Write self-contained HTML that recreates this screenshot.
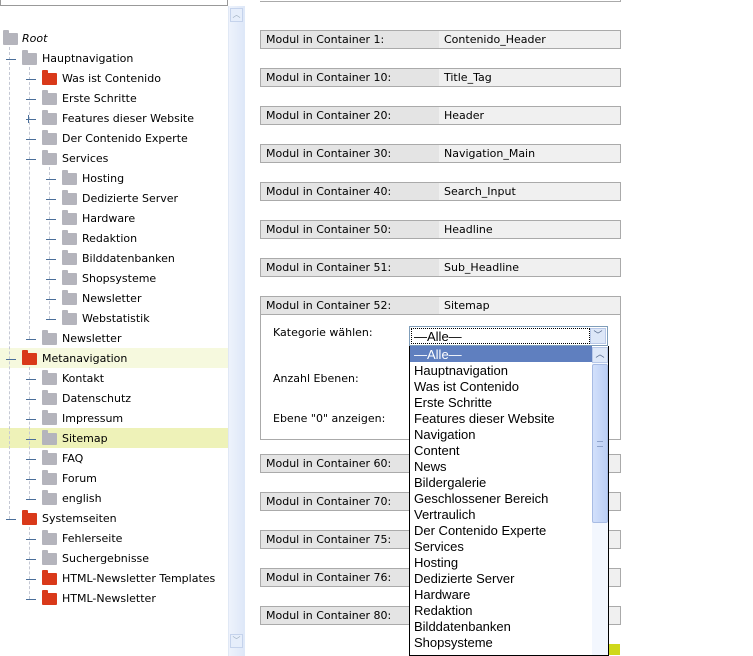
<!DOCTYPE html>
<html><head><meta charset="utf-8">
<style>
*{margin:0;padding:0;box-sizing:border-box}
body{width:753px;height:654px;overflow:hidden;background:#fff;position:relative;font-family:"DejaVu Sans",Verdana,sans-serif;font-size:11px;color:#000}
#w{position:absolute;left:0;top:1px;width:753px;height:654px}
.a{position:absolute}
.it{position:absolute;height:20px;line-height:20px;white-space:nowrap;margin-top:1px}
.f{position:absolute;width:15px;height:12px;background:#b4b4bc;border-radius:1px;margin-top:1px}
.f::before{content:"";position:absolute;left:0;top:-3px;width:6px;height:4px;background:inherit;border-radius:1px 1px 0 0}
.r{background:#d9391a}
.dh{position:absolute;height:1px;width:10px;border-top:1px solid #4a6f9a;margin-top:1px}
.v{position:absolute;width:1px;border-left:1px dashed #c4c8d4}
.row{position:absolute;left:260px;width:361px;height:19px;border:1px solid #aaa;background:#f0f0f0;line-height:18px}
.row .l{position:absolute;left:0;top:0;width:178px;height:17px;background:#e4e4e4;padding-left:5px}
.row .val{position:absolute;left:183px;top:0}
.dd div{height:16px;line-height:17px;padding-left:4px;font-family:"Liberation Sans",Arial,sans-serif;font-size:13px}
</style></head><body><div id="w">
<div class="a" style="left:0;top:-3px;width:228px;height:8px;border:1px solid #999;background:#fff"></div>
<div class="a" style="left:228px;top:5px;width:17px;height:650px;background:linear-gradient(90deg,#eef3fc,#dde7f8);border-left:1px solid #e0e8f5"></div>
<div class="a" style="left:230px;top:7px;width:13px;height:14px;border:1px solid #c5d3ec;background:#e6eefb;color:#9ab;font-size:8px;text-align:center;line-height:12px">︿</div>
<div class="a" style="left:230px;top:633px;width:13px;height:14px;border:1px solid #c5d3ec;background:#e6eefb;color:#9ab;font-size:8px;text-align:center;line-height:12px">﹀</div>
<div class="a" style="left:0;top:347px;width:228px;height:20px;background:#f6f9de"></div>
<div class="a" style="left:0;top:427px;width:228px;height:20px;background:#eef2b8"></div>
<div class="v" style="left:9px;top:46px;height:472px"></div>
<div class="v" style="left:29px;top:66px;height:272px"></div>
<div class="v" style="left:29px;top:366px;height:132px"></div>
<div class="v" style="left:29px;top:526px;height:72px"></div>
<div class="v" style="left:49px;top:166px;height:152px"></div>

<div class="f" style="left:3px;top:31px"></div><div class="it" style="left:22px;top:27px;font-style:italic">Root</div>

<div class="dh" style="left:6px;top:57px"></div><div class="f" style="left:22px;top:51px"></div><div class="it" style="left:42px;top:47px">Hauptnavigation</div>
<div class="dh" style="left:26px;top:77px"></div><div class="f r" style="left:42px;top:71px"></div><div class="it" style="left:62px;top:67px">Was ist Contenido</div>
<div class="dh" style="left:26px;top:97px"></div><div class="f" style="left:42px;top:91px"></div><div class="it" style="left:62px;top:87px">Erste Schritte</div>
<div class="dh" style="left:26px;top:117px"></div><div class="a" style="left:28px;top:114px;width:1px;height:8px;background:#4a6f9a"></div><div class="f" style="left:42px;top:111px"></div><div class="it" style="left:62px;top:107px">Features dieser Website</div>
<div class="dh" style="left:26px;top:137px"></div><div class="f" style="left:42px;top:131px"></div><div class="it" style="left:62px;top:127px">Der Contenido Experte</div>
<div class="dh" style="left:26px;top:157px"></div><div class="f" style="left:42px;top:151px"></div><div class="it" style="left:62px;top:147px">Services</div>
<div class="dh" style="left:46px;top:177px"></div><div class="f" style="left:62px;top:171px"></div><div class="it" style="left:82px;top:167px">Hosting</div>
<div class="dh" style="left:46px;top:197px"></div><div class="f" style="left:62px;top:191px"></div><div class="it" style="left:82px;top:187px">Dedizierte Server</div>
<div class="dh" style="left:46px;top:217px"></div><div class="f" style="left:62px;top:211px"></div><div class="it" style="left:82px;top:207px">Hardware</div>
<div class="dh" style="left:46px;top:237px"></div><div class="f" style="left:62px;top:231px"></div><div class="it" style="left:82px;top:227px">Redaktion</div>
<div class="dh" style="left:46px;top:257px"></div><div class="f" style="left:62px;top:251px"></div><div class="it" style="left:82px;top:247px">Bilddatenbanken</div>
<div class="dh" style="left:46px;top:277px"></div><div class="f" style="left:62px;top:271px"></div><div class="it" style="left:82px;top:267px">Shopsysteme</div>
<div class="dh" style="left:46px;top:297px"></div><div class="f" style="left:62px;top:291px"></div><div class="it" style="left:82px;top:287px">Newsletter</div>
<div class="dh" style="left:46px;top:317px"></div><div class="f" style="left:62px;top:311px"></div><div class="it" style="left:82px;top:307px">Webstatistik</div>
<div class="dh" style="left:26px;top:337px"></div><div class="f" style="left:42px;top:331px"></div><div class="it" style="left:62px;top:327px">Newsletter</div>

<div class="dh" style="left:6px;top:357px"></div><div class="f r" style="left:22px;top:351px"></div><div class="it" style="left:42px;top:347px">Metanavigation</div>
<div class="dh" style="left:26px;top:377px"></div><div class="f" style="left:42px;top:371px"></div><div class="it" style="left:62px;top:367px">Kontakt</div>
<div class="dh" style="left:26px;top:397px"></div><div class="f" style="left:42px;top:391px"></div><div class="it" style="left:62px;top:387px">Datenschutz</div>
<div class="dh" style="left:26px;top:417px"></div><div class="f" style="left:42px;top:411px"></div><div class="it" style="left:62px;top:407px">Impressum</div>
<div class="dh" style="left:26px;top:437px"></div><div class="f" style="left:42px;top:431px"></div><div class="it" style="left:62px;top:427px">Sitemap</div>
<div class="dh" style="left:26px;top:457px"></div><div class="f" style="left:42px;top:451px"></div><div class="it" style="left:62px;top:447px">FAQ</div>
<div class="dh" style="left:26px;top:477px"></div><div class="f" style="left:42px;top:471px"></div><div class="it" style="left:62px;top:467px">Forum</div>
<div class="dh" style="left:26px;top:497px"></div><div class="f" style="left:42px;top:491px"></div><div class="it" style="left:62px;top:487px">english</div>

<div class="dh" style="left:6px;top:517px"></div><div class="f r" style="left:22px;top:511px"></div><div class="it" style="left:42px;top:507px">Systemseiten</div>
<div class="dh" style="left:26px;top:537px"></div><div class="f" style="left:42px;top:531px"></div><div class="it" style="left:62px;top:527px">Fehlerseite</div>
<div class="dh" style="left:26px;top:557px"></div><div class="f" style="left:42px;top:551px"></div><div class="it" style="left:62px;top:547px">Suchergebnisse</div>
<div class="dh" style="left:26px;top:577px"></div><div class="f r" style="left:42px;top:571px"></div><div class="it" style="left:62px;top:567px">HTML-Newsletter Templates</div>
<div class="dh" style="left:26px;top:597px"></div><div class="f r" style="left:42px;top:591px"></div><div class="it" style="left:62px;top:587px">HTML-Newsletter</div>

<div class="a" style="left:260px;top:-1px;width:361px;height:2px;border-bottom:1px solid #aaa;border-right:1px solid #aaa"></div>
<div class="row" style="top:29px"><div class="l">Modul in Container 1:</div><div class="val">Contenido_Header</div></div>
<div class="row" style="top:67px"><div class="l">Modul in Container 10:</div><div class="val">Title_Tag</div></div>
<div class="row" style="top:105px"><div class="l">Modul in Container 20:</div><div class="val">Header</div></div>
<div class="row" style="top:143px"><div class="l">Modul in Container 30:</div><div class="val">Navigation_Main</div></div>
<div class="row" style="top:181px"><div class="l">Modul in Container 40:</div><div class="val">Search_Input</div></div>
<div class="row" style="top:219px"><div class="l">Modul in Container 50:</div><div class="val">Headline</div></div>
<div class="row" style="top:257px"><div class="l">Modul in Container 51:</div><div class="val">Sub_Headline</div></div>
<div class="a" style="left:260px;top:295px;width:361px;height:144px;border:1px solid #aaa"></div>
<div class="row" style="top:295px"><div class="l">Modul in Container 52:</div><div class="val">Sitemap</div></div>
<div class="a" style="left:273px;top:325px">Kategorie wählen:</div>
<div class="a" style="left:273px;top:371px">Anzahl Ebenen:</div>
<div class="a" style="left:273px;top:411px">Ebene "0" anzeigen:</div>
<div class="row" style="top:453px"><div class="l">Modul in Container 60:</div></div>
<div class="row" style="top:491px"><div class="l">Modul in Container 70:</div></div>
<div class="row" style="top:529px"><div class="l">Modul in Container 75:</div></div>
<div class="row" style="top:567px"><div class="l">Modul in Container 76:</div></div>
<div class="row" style="top:605px"><div class="l">Modul in Container 80:</div></div>
<div class="a" style="left:608px;top:643px;width:12px;height:11px;background:#cfd81a"></div>

<div class="a" style="left:409px;top:325px;width:199px;height:20px;border:1px solid #7f9db9;background:#fff"></div>
<div class="a" style="left:411px;top:327px;width:179px;height:16px;border:1px dotted #000;font-family:'Liberation Sans',Arial,sans-serif;font-size:13px;line-height:15px;padding-left:2px">—Alle—</div>
<div class="a" style="left:590px;top:327px;width:16px;height:16px;border:1px solid #b8c8e8;background:#dde7f8;color:#4d6185;font-size:9px;text-align:center;line-height:14px">﹀</div>
<div class="a dd" style="left:409px;top:345px;width:200px;height:310px;border:1px solid #000;border-top:none;background:#fff;overflow:hidden">
<div style="background:#5f7fbf;color:#fff;margin-right:16px">—Alle—</div>
<div>Hauptnavigation</div><div>Was ist Contenido</div><div>Erste Schritte</div><div>Features dieser Website</div><div>Navigation</div><div>Content</div><div>News</div><div>Bildergalerie</div><div>Geschlossener Bereich</div><div>Vertraulich</div><div>Der Contenido Experte</div><div>Services</div><div>Hosting</div><div>Dedizierte Server</div><div>Hardware</div><div>Redaktion</div><div>Bilddatenbanken</div><div>Shopsysteme</div>
</div>
<div class="a" style="left:592px;top:346px;width:16px;height:308px;background:#f3f7fe"></div>
<div class="a" style="left:592px;top:346px;width:16px;height:16px;border:1px solid #b8c8e8;background:#dde7f8;color:#4d6185;font-size:9px;text-align:center;line-height:14px">︿</div>
<div class="a" style="left:592px;top:363px;width:16px;height:159px;border:1px solid #a8bce4;border-radius:2px;background:linear-gradient(90deg,#d2e0fb,#bccff5)"></div>
<div class="a" style="left:597px;top:440px;width:6px;height:6px;border-top:1px solid #8ea3cc;border-bottom:1px solid #8ea3cc"></div>
</div></body></html>
